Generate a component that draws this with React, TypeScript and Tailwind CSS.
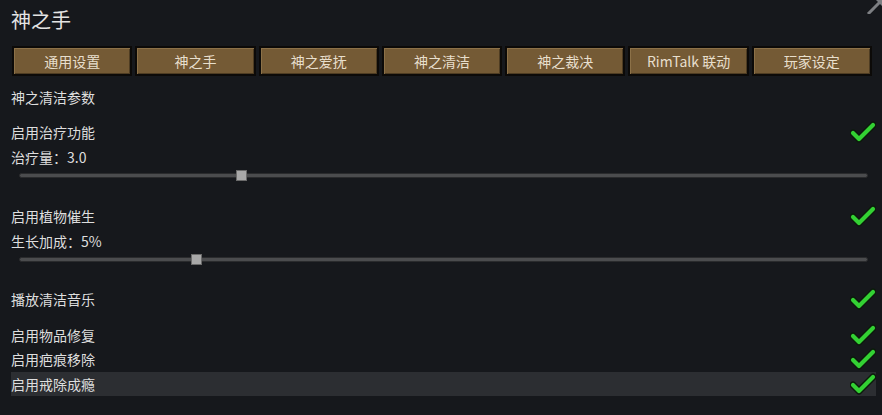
import React from 'react';

const tabs = ['通用设置', '神之手', '神之爱抚', '神之清洁', '神之裁决', 'RimTalk 联动', '玩家设定'];

const Check: React.FC = () => (
  <svg width="26" height="22" viewBox="0 0 26 22" className="shrink-0">
    <polyline points="3,12 9,18 23,4" fill="none" stroke="#0b1a0b" strokeWidth="7" strokeLinecap="round" strokeLinejoin="round" />
    <polyline points="3,12 9,18 23,4" fill="none" stroke="#33d133" strokeWidth="4.2" strokeLinecap="round" strokeLinejoin="round" />
  </svg>
);

const Slider: React.FC<{ pct: number }> = ({ pct }) => (
  <div className="relative h-3 ml-[8px] mr-[8px] flex items-center">
    <div className="w-full h-[5px] rounded-full bg-[#4b4c4e] border border-[#2a2b2d]" />
    <div
      className="absolute top-[1px] w-[11px] h-[11px] bg-[#a8a8a8] border border-[#6a6a6a]"
      style={{ left: `calc(${pct}% - 5px)` }}
    />
  </div>
);

const Row: React.FC<{ label: string; check?: boolean; hl?: boolean; className?: string }> = ({ label, check, hl, className }) => (
  <div className={`h-6 flex items-center justify-between ${hl ? 'bg-[#2c2e32]' : ''} ${className ?? ''}`}>
    <span>{label}</span>
    {check && <Check />}
  </div>
);

export default function App() {
  return (
    <div
      className="relative w-[882px] h-[415px] overflow-hidden bg-[#16181c] text-[#dedede] text-[14px] leading-6 pl-[11px] pr-[6px]"
      style={{ fontFamily: '"Noto Sans CJK SC", "Noto Sans", sans-serif' }}
    >
      <svg className="absolute top-0 right-0" width="16" height="14" viewBox="0 0 16 14">
        <line x1="2" y1="14" x2="14" y2="2" stroke="#7d7f83" strokeWidth="3" />
        <polygon points="10,0 18,0 18,8" fill="#7d7f83" />
      </svg>

      <div className="pt-[7px] h-[33px] text-[20px] leading-[26px] text-[#e4e4e4]">神之手</div>

      <div className="mt-[13px] flex gap-[3px] pl-[1px] pr-[4px]">
        {tabs.map((t) => (
          <div
            key={t}
            className="flex-1 h-[30px] flex items-center justify-center bg-[#745a35] border-2 border-[#0c0a08] shadow-[inset_1px_1px_0_#8c7148,inset_-1px_-1px_0_#4e3c22] text-[#e8dfcd] text-[14px]"
          >
            {t}
          </div>
        ))}
      </div>

      <div className="mt-[9px]">
        <Row label="神之清洁参数" />
      </div>

      <Row label="启用治疗功能" check className="mt-[11px]" />
      <Row label="治疗量：3.0" className="mt-[1px]" />
      <Slider pct={26.2} />

      <Row label="启用植物催生" check className="mt-[23px]" />
      <Row label="生长加成：5%" className="mt-[1px]" />
      <Slider pct={20.8} />

      <Row label="播放清洁音乐" check className="mt-[22px]" />

      <Row label="启用物品修复" check className="mt-[12px]" />
      <Row label="启用疤痕移除" check />
      <Row label="启用戒除成瘾" check hl className="mt-[1px]" />
    </div>
  );
}
